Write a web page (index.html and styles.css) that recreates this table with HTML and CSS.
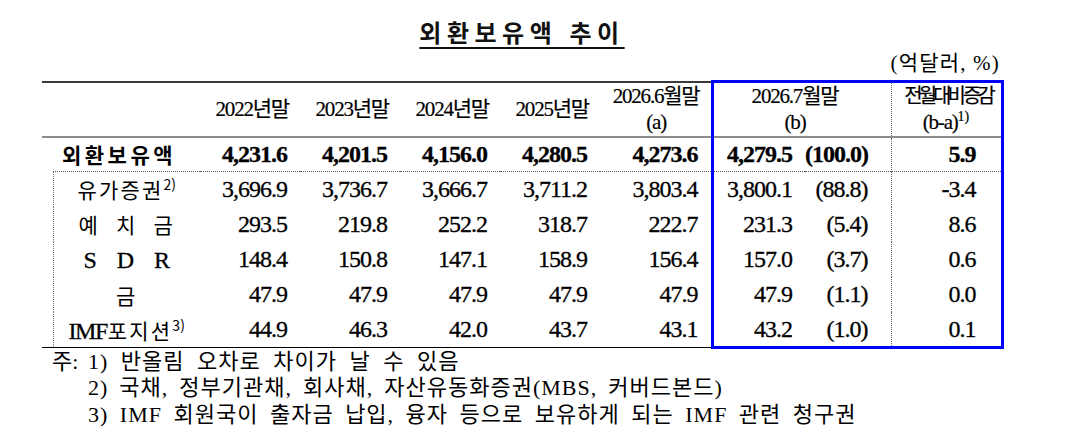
FILE: index.html
```html
<!DOCTYPE html>
<html lang="ko">
<head>
<meta charset="utf-8">
<title>외환보유액 추이</title>
<link rel="stylesheet" href="styles.css">
</head>
<body>
<div class="page">
  <h1 class="title"><span class="title-text">외환보유액 추이</span></h1>
  <div class="unit">(억달러, %)</div>
  <table class="fx">
    <colgroup>
      <col class="c-gut">
      <col class="c-label">
      <col class="c-yr">
      <col class="c-yr">
      <col class="c-yr">
      <col class="c-yr">
      <col class="c-jun">
      <col class="c-julv">
      <col class="c-julp">
      <col class="c-chg">
    </colgroup>
    <thead>
      <tr class="head">
        <th colspan="2" class="hd"></th>
        <th class="hd">2022년말</th>
        <th class="hd">2023년말</th>
        <th class="hd">2024년말</th>
        <th class="hd">2025년말</th>
        <th class="hd"><span class="stack">2026.6월말<br>(a)</span></th>
        <th colspan="2" class="hd h-jul"><span class="stack">2026.7월말<br>(b)</span></th>
        <th class="hd h-chg"><span class="stack"><span class="squeeze">전월대비 증감</span><br>(b-a)<sup>1)</sup></span></th>
      </tr>
    </thead>
    <tbody>
      <tr class="total">
        <th colspan="2" class="lbl-total">외환보유액</th>
        <td>4,231.6</td>
        <td>4,201.5</td>
        <td>4,156.0</td>
        <td>4,280.5</td>
        <td>4,273.6</td>
        <td class="jv">4,279.5</td>
        <td class="jp">(100.0)</td>
        <td class="chg">5.9</td>
      </tr>
      <tr class="sub first">
        <td class="gut"></td>
        <th class="lbl">유가증권<sup>2)</sup></th>
        <td>3,696.9</td>
        <td>3,736.7</td>
        <td>3,666.7</td>
        <td>3,711.2</td>
        <td>3,803.4</td>
        <td class="jv">3,800.1</td>
        <td class="jp">(88.8)</td>
        <td class="chg">-3.4</td>
      </tr>
      <tr class="sub">
        <td class="gut"></td>
        <th class="lbl wide">예 치 금</th>
        <td>293.5</td>
        <td>219.8</td>
        <td>252.2</td>
        <td>318.7</td>
        <td>222.7</td>
        <td class="jv">231.3</td>
        <td class="jp">(5.4)</td>
        <td class="chg">8.6</td>
      </tr>
      <tr class="sub">
        <td class="gut"></td>
        <th class="lbl"><span class="lat sdr">S D R</span></th>
        <td>148.4</td>
        <td>150.8</td>
        <td>147.1</td>
        <td>158.9</td>
        <td>156.4</td>
        <td class="jv">157.0</td>
        <td class="jp">(3.7)</td>
        <td class="chg">0.6</td>
      </tr>
      <tr class="sub">
        <td class="gut"></td>
        <th class="lbl">금</th>
        <td>47.9</td>
        <td>47.9</td>
        <td>47.9</td>
        <td>47.9</td>
        <td>47.9</td>
        <td class="jv">47.9</td>
        <td class="jp">(1.1)</td>
        <td class="chg">0.0</td>
      </tr>
      <tr class="sub last">
        <td class="gut"></td>
        <th class="lbl"><span class="lat imf">IMF</span>포지션<sup>3)</sup></th>
        <td>44.9</td>
        <td>46.3</td>
        <td>42.0</td>
        <td>43.7</td>
        <td>43.1</td>
        <td class="jv">43.2</td>
        <td class="jp">(1.0)</td>
        <td class="chg">0.1</td>
      </tr>
    </tbody>
  </table>
  <div class="notes">
    <div class="note-key">주:</div>
    <div class="note-list">
      <p class="note n1">1) 반올림 오차로 차이가 날 수 있음</p>
      <p class="note n2">2) 국채, 정부기관채, 회사채, 자산유동화증권(MBS, 커버드본드)</p>
      <p class="note n3">3) IMF 회원국이 출자금 납입, 융자 등으로 보유하게 되는 IMF 관련 청구권</p>
    </div>
  </div>
</div>
</body>
</html>
```
FILE: styles.css
```css
html, body {
  margin: 0;
  padding: 0;
  background: #ffffff;
}

body {
  font-family: "Liberation Serif", "Tinos", "Times New Roman", "DejaVu Serif", "Noto Sans CJK KR", serif;
  color: #000000;
}

.page {
  width: 960px;
  margin-left: 42px;
  padding-top: 17px;
}

.title {
  margin: 0;
  text-align: center;
  font-family: "Noto Sans CJK KR", sans-serif;
  font-size: 24px;
  line-height: 30px;
  font-weight: 700;
  letter-spacing: 5.5px;
}

.title-text {
  text-decoration: underline;
  text-decoration-thickness: 2px;
  text-underline-offset: 5px;
  color: #111111;
}

.unit {
  margin-top: 4px;
  text-align: right;
  font-size: 21px;
  line-height: 24px;
  letter-spacing: 1.2px;
  padding-right: 2px;
}

.fx {
  width: 960px;
  margin-top: 5px;
  border-collapse: collapse;
  table-layout: fixed;
}

.c-gut { width: 11px; }
.c-label { width: 147px; }
.c-yr { width: 100px; }
.c-jun { width: 112px; }
.c-julv { width: 93px; }
.c-julp { width: 86px; }
.c-chg { width: 111px; }

.fx th, .fx td {
  padding: 0;
  vertical-align: middle;
}

/* header */
.head { height: 55px; }

.hd {
  border-top: 2px solid #3a3a3a;
  border-bottom: 2px solid #8c8c8c;
  font-weight: 400;
  font-size: 21px;
  line-height: 26px;
  letter-spacing: -1.2px;
  text-align: right;
  padding-right: 11px !important;
  white-space: nowrap;
  -webkit-text-stroke: 0.2px #000000;
}

.stack {
  display: inline-block;
  text-align: center;
}

.h-jul {
  text-align: center;
  padding-right: 14px !important;
  border-left: 3px solid #0000ff;
  border-top: 3px solid #0000ff;
}

.h-chg {
  text-align: center;
  padding-right: 0 !important;
  border-left: 1px dotted #666666;
  border-right: 3px solid #0000ff;
  border-top: 3px solid #0000ff;
}

.squeeze {
  letter-spacing: -4px;
  font-size: 20px;
  margin-left: 4px;
}

.fx sup {
  font-size: 14px;
  line-height: 0;
  letter-spacing: 0;
  vertical-align: 0.6em;
}

/* body rows */
.fx td {
  font-size: 24px;
  letter-spacing: -1px;
  text-align: right;
  padding-right: 13px;
  white-space: nowrap;
  -webkit-text-stroke: 0.3px #000000;
}

.total { height: 35px; }
.sub { height: 35.2px; }

.total td { font-weight: 700; }

.lbl-total {
  font-family: "Noto Sans CJK KR", sans-serif;
  font-size: 21px;
  font-weight: 700;
  letter-spacing: 3.5px;
  text-align: center;
  padding-right: 4px !important;
}

.lbl {
  font-family: "Noto Sans CJK KR", sans-serif;
  font-size: 21px;
  font-weight: 400;
  letter-spacing: 2.2px;
  text-align: center;
  border-left: 1px dotted #777777;
  white-space: nowrap;
}

.lbl.wide { word-spacing: 8px; }

.lat {
  font-family: "Liberation Serif", "Tinos", "Times New Roman", "DejaVu Serif", serif;
  font-size: 24px;
  -webkit-text-stroke: 0.3px #000000;
}

.sdr { word-spacing: 14px; letter-spacing: 0; }
.imf { letter-spacing: -1.5px; margin-right: 1px; }

.first td:not(.gut), .first th {
  border-top: 1px dotted #555555;
}

.jv {
  border-left: 3px solid #0000ff;
}

.fx td.jp { padding-right: 23px; }

.fx td.chg {
  padding-right: 25px;
  border-left: 1px dotted #666666;
  border-right: 3px solid #0000ff;
}

.last td, .last th {
  border-bottom: 1px solid #000000;
}

.last td.jv, .last td.jp, .last td.chg {
  border-bottom: 3px solid #0000ff;
}

/* notes */
.notes {
  display: grid;
  grid-template-columns: 36px auto;
  padding-left: 10px;
  font-size: 22px;
  line-height: 26.5px;
}

.note-key { white-space: nowrap; }

.note {
  margin: 0;
  white-space: nowrap;
  letter-spacing: 1px;
}

.note.n1 { word-spacing: 6px; }
.note.n2 { word-spacing: 4.5px; }
.note.n3 { word-spacing: 5px; }
```
